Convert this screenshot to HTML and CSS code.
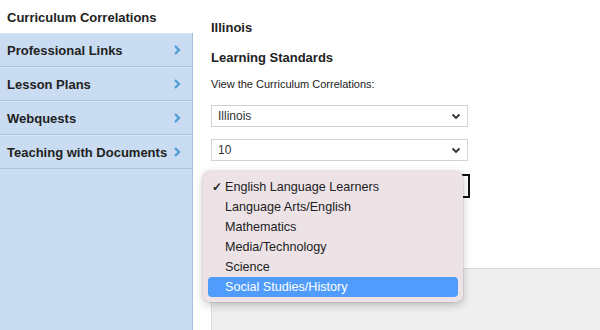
FILE: index.html
```html
<!DOCTYPE html>
<html>
<head>
    <link rel="stylesheet" href="styles.css">
</head>
<body>
    <div class="page">
        <div class="sidebar">
            <div class="side-title">Curriculum Correlations</div>
            <ul class="menu">
                <li>Professional Links <svg class="chev" width="8" height="12" viewBox="0 0 8 12"><path d="M2 2l4 4-4 4" fill="none" stroke="#4d9bd6" stroke-width="2.2"/></svg></li>
                <li>Lesson Plans <svg class="chev" width="8" height="12" viewBox="0 0 8 12"><path d="M2 2l4 4-4 4" fill="none" stroke="#4d9bd6" stroke-width="2.2"/></svg></li>
                <li>Webquests <svg class="chev" width="8" height="12" viewBox="0 0 8 12"><path d="M2 2l4 4-4 4" fill="none" stroke="#4d9bd6" stroke-width="2.2"/></svg></li>
                <li>Teaching with Documents <svg class="chev" width="8" height="12" viewBox="0 0 8 12"><path d="M2 2l4 4-4 4" fill="none" stroke="#4d9bd6" stroke-width="2.2"/></svg></li>
            </ul>
        </div>

        <div class="main">
            <h3 class="state">Illinois</h3>
            <h3 class="standards">Learning Standards</h3>
            <p class="intro">View the Curriculum Correlations:</p>

            <div class="select">
                <span>Illinois</span>
                <svg width="10" height="7" viewBox="0 0 10 7"><path d="M1.5 1.5l3.5 3.5 3.5-3.5" fill="none" stroke="#333" stroke-width="1.8"/></svg>
            </div>
            <div class="select">
                <span>10</span>
                <svg width="10" height="7" viewBox="0 0 10 7"><path d="M1.5 1.5l3.5 3.5 3.5-3.5" fill="none" stroke="#333" stroke-width="1.8"/></svg>
            </div>
            <div class="select focused">
                <span></span>
                <svg width="10" height="7" viewBox="0 0 10 7"><path d="M1.5 1.5l3.5 3.5 3.5-3.5" fill="none" stroke="#333" stroke-width="1.8"/></svg>
            </div>

            <div class="results"></div>

            <ul class="dropdown">
                <li class="checked"><span class="tick">&#10003;</span>English Language Learners</li>
                <li>Language Arts/English</li>
                <li>Mathematics</li>
                <li>Media/Technology</li>
                <li>Science</li>
                <li class="active">Social Studies/History</li>
            </ul>
        </div>
    </div>
</body>
</html>
```

FILE: styles.css
```css
body {
    margin: 0;
    font-family: "Liberation Sans", Arial, sans-serif;
    color: #222;
    background: #fff;
}
.page {
    display: flex;
    height: 330px;
    overflow: hidden;
}
.sidebar {
    width: 193px;
    display: flex;
    flex-direction: column;
}
.side-title {
    height: 33px;
    box-sizing: border-box;
    padding: 10px 0 0 7px;
    font-size: 13px;
    font-weight: bold;
}
.menu {
    list-style: none;
    margin: 0;
    padding: 0;
    flex: 1;
    background: #c9dcf1;
    border-right: 1px solid #a7c0de;
}
.menu li {
    height: 34px;
    box-sizing: border-box;
    padding: 0 11px 0 7px;
    display: flex;
    align-items: center;
    justify-content: space-between;
    font-size: 13px;
    font-weight: bold;
    border-bottom: 1px solid #a9c2df;
    border-top: 1px solid #dbe7f5;
}
.main {
    flex: 1;
    position: relative;
    padding-left: 18px;
}
.main h3 {
    margin: 0;
    font-size: 13px;
    font-weight: bold;
}
.state {
    padding-top: 20px;
}
.standards {
    padding-top: 15px;
}
.intro {
    margin: 13px 0 0;
    font-size: 11px;
}
.select {
    width: 257px;
    height: 22px;
    box-sizing: border-box;
    border: 1px solid #d3d3d3;
    display: flex;
    align-items: center;
    justify-content: space-between;
    padding: 0 6px 0 6px;
    font-size: 12px;
    color: #333;
    margin-top: 12px;
}
.select:first-of-type {
    margin-top: 15px;
}
.select.focused {
    border: 2px solid #111;
    height: 24px;
    width: 259px;
    margin-top: 13px;
}
.results {
    position: absolute;
    left: 18px;
    right: 0;
    top: 268px;
    bottom: 0;
    background: #efefef;
    border-top: 1px solid #dcdcdc;
    border-left: 1px solid #dcdcdc;
}
.dropdown {
    position: absolute;
    left: 10px;
    top: 171px;
    width: 260px;
    box-sizing: border-box;
    margin: 0;
    padding: 6px 5px 5px;
    list-style: none;
    background: #ede3e7;
    border-radius: 7px;
    box-shadow: 0 3px 10px rgba(0, 0, 0, 0.22), 0 0 0 1px rgba(0, 0, 0, 0.06);
    font-size: 12.6px;
    color: #222;
}
.dropdown li {
    height: 20px;
    line-height: 21px;
    padding-left: 17px;
    border-radius: 4px;
    position: relative;
}
.dropdown .tick {
    position: absolute;
    left: 4px;
    font-weight: bold;
    font-size: 12px;
}
.dropdown li.active {
    background: #4f9cfc;
    color: #fff;
}
```
